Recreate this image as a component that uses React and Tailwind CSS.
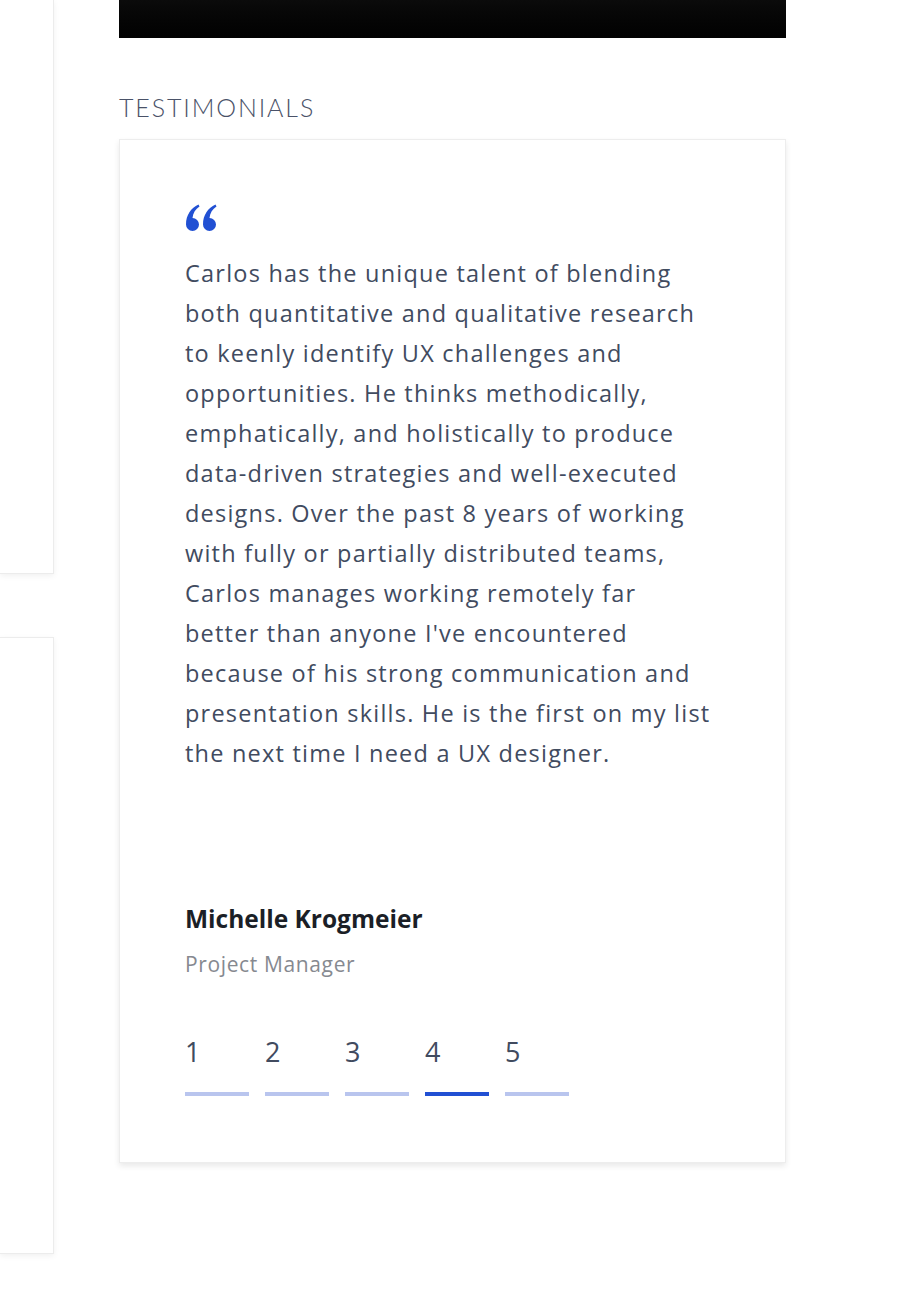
const lines = [
  'Carlos has the unique talent of blending',
  'both quantitative and qualitative research',
  'to keenly identify UX challenges and',
  'opportunities. He thinks methodically,',
  'emphatically, and holistically to produce',
  'data-driven strategies and well-executed',
  'designs. Over the past 8 years of working',
  'with fully or partially distributed teams,',
  'Carlos manages working remotely far',
  "better than anyone I've encountered",
  'because of his strong communication and',
  'presentation skills. He is the first on my list',
  'the next time I need a UX designer.',
]

function QuoteMark() {
  const mark = 'M13.5 0.5 C6 4 1 11 1 20.5 A6.5 6.5 0 1 0 7.5 14 C8 9 10.5 5 14.5 2.5 Z'
  return (
    <svg width="33" height="27" viewBox="0 0 33 27" className="block text-[#2150d3]">
      <path d={mark} fill="currentColor" />
      <path d={mark} fill="currentColor" transform="translate(17 0)" />
    </svg>
  )
}

export default function App() {
  const active = 4
  return (
    <div className="flex h-[1308px] w-[916px] overflow-hidden bg-white font-['Open_Sans',sans-serif]">
      <div className="flex w-[54px] shrink-0 flex-col">
        <div className="h-[574px] border-r border-b border-[#ececec] bg-white shadow-[0_2px_6px_rgba(0,0,0,0.06)]" />
        <div className="mt-[63px] h-[617px] border border-l-0 border-[#ececec] bg-white shadow-[0_2px_6px_rgba(0,0,0,0.06)]" />
      </div>

      <div className="ml-[65px] w-[667px] shrink-0">
        <div className="h-[38px] bg-gradient-to-b from-[#0b0b0b] to-[#020202]" />

        <h2 className="mt-[53px] font-['Lato',sans-serif] text-[25px] font-light uppercase leading-[32px] tracking-[0.075em] text-[#4a5268]">
          Testimonials
        </h2>

        <div className="mt-[16px] border border-[#ededed] bg-white px-[65px] pt-[64px] pb-[66px] shadow-[0_3px_6px_rgba(0,0,0,0.09)]">
          <QuoteMark />

          <p className="mt-[22px] text-[23.5px] leading-[40px] tracking-[0.052em] text-[#414b5f]">
            {lines.map((l) => (
              <span key={l} className="block whitespace-nowrap">
                {l}
              </span>
            ))}
          </p>

          <div className="mt-[130px] text-[24.5px] font-bold leading-[32px] text-[#1b1f27]">Michelle Krogmeier</div>
          <div className="mt-[15px] text-[21px] leading-[28px] tracking-[0.03em] text-[#868990]">Project Manager</div>

          <div className="mt-[58px] flex gap-4">
            {[1, 2, 3, 4, 5].map((n) => (
              <div key={n} className="w-16">
                <div className="text-[27px] leading-[32px] text-[#414b5f]">{n}</div>
                <div className={n === active ? 'mt-6 h-1 bg-[#2150d3]' : 'mt-6 h-1 bg-[#b9c5ee]'} />
              </div>
            ))}
          </div>
        </div>
      </div>
    </div>
  )
}
